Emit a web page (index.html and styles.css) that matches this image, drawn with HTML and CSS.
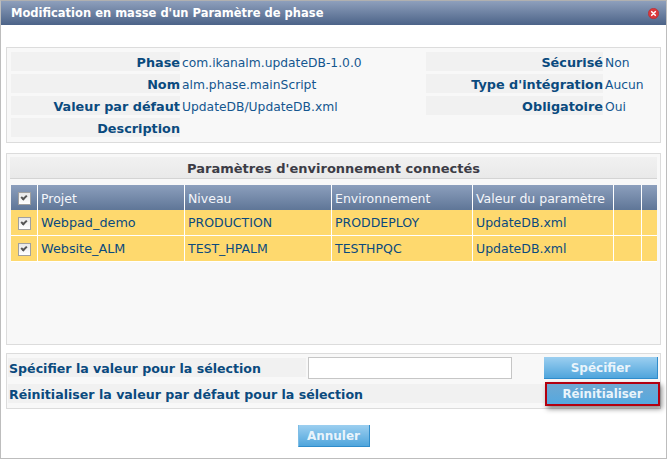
FILE: index.html
```html
<!DOCTYPE html>
<html>
<head>
	<meta charset="utf-8">
	<link rel="stylesheet" href="styles.css">
	<title>Modification en masse</title>
</head>
<body>
	<div class="dialog">
		<div class="titlebar">
			<span class="titleText">Modification en masse d'un Paramètre de phase</span>
			<svg class="closeIcon" width="11" height="11" viewBox="0 0 11 11">
				<circle cx="5.5" cy="5.5" r="5.2" fill="#d9383c" stroke="#b92c30" stroke-width="0.6"/>
				<path d="M3.7 3.7L7.3 7.3M7.3 3.7L3.7 7.3" stroke="#fff" stroke-width="1.6" stroke-linecap="round"/>
			</svg>
		</div>
		<div class="content">
			<div class="panel details">
				<div class="detailsCol leftCol">
					<div class="field"><div class="label">Phase</div><div class="value">com.ikanalm.updateDB-1.0.0</div></div>
					<div class="field"><div class="label">Nom</div><div class="value">alm.phase.mainScript</div></div>
					<div class="field"><div class="label">Valeur par défaut</div><div class="value">UpdateDB/UpdateDB.xml</div></div>
					<div class="field"><div class="label">Description</div><div class="value"></div></div>
				</div>
				<div class="detailsCol rightCol">
					<div class="field"><div class="label">Sécurisé</div><div class="value">Non</div></div>
					<div class="field"><div class="label">Type d'intégration</div><div class="value">Aucun</div></div>
					<div class="field"><div class="label">Obligatoire</div><div class="value">Oui</div></div>
				</div>
			</div>
			<div class="panel envPanel">
				<div class="envTitle">Paramètres d'environnement connectés</div>
				<table class="envTable">
					<colgroup>
						<col class="colCheck"><col class="colProject"><col class="colLevel"><col class="colEnv"><col class="colValue"><col class="colIcon"><col class="colIcon2">
					</colgroup>
					<thead>
						<tr>
							<th class="checkCell"><span class="check"></span></th>
							<th>Projet</th>
							<th>Niveau</th>
							<th>Environnement</th>
							<th>Valeur du paramètre</th>
							<th></th>
							<th></th>
						</tr>
					</thead>
					<tbody>
						<tr>
							<td class="checkCell"><span class="check"></span></td>
							<td class="projectCell">Webpad_demo</td>
							<td>PRODUCTION</td>
							<td>PRODDEPLOY</td>
							<td>UpdateDB.xml</td>
							<td></td>
							<td></td>
						</tr>
						<tr>
							<td class="checkCell"><span class="check"></span></td>
							<td class="projectCell">Website_ALM</td>
							<td>TEST_HPALM</td>
							<td>TESTHPQC</td>
							<td>UpdateDB.xml</td>
							<td></td>
							<td></td>
						</tr>
					</tbody>
				</table>
			</div>
			<div class="panel actions">
				<div class="actionRow specifyRow">
					<div class="actionLabel specifyLabel">Spécifier la valeur pour la sélection</div>
					<input type="text" class="valueInput">
					<div class="btn specifyBtn">Spécifier</div>
				</div>
				<div class="actionRow resetRow">
					<div class="actionLabel resetLabel">Réinitialiser la valeur par défaut pour la sélection</div>
					<div class="btn resetBtn">Réinitialiser</div>
				</div>
			</div>
			<div class="footer">
				<div class="btn cancelBtn">Annuler</div>
			</div>
		</div>
	</div>
</body>
</html>
```

FILE: styles.css
```css
html, body{
	margin: 0;
	padding: 0;
	background-color: #fff;
}
body{
	font-family: 'DejaVu Sans', sans-serif;
	font-size: 12px;
	color: #0a4a7e;
}
.dialog{
	box-sizing: border-box;
	width: 667px;
	height: 459px;
	border: solid 1px #bdbdbd;
	border-top-color: #b0b0b0;
	overflow: hidden;
}
.titlebar{
	box-sizing: border-box;
	height: 24px;
	padding: 0 7px 0 10px;
	display: flex;
	align-items: center;
	justify-content: space-between;
	background: linear-gradient(#8e9fbc, #4c6388);
	color: #fff;
	font-weight: bold;
	font-size: 11.5px;
}
.content{
	padding: 22px 5px 0 5px;
}
.panel{
	box-sizing: border-box;
	border: solid 1px #dcdcdc;
	background-color: #f8f8f8;
}
.details{
	height: 96px;
	padding: 4px 4px 0 4px;
	display: flex;
}
.detailsCol{
	display: flex;
	flex-direction: column;
	gap: 3px;
}
.leftCol{
	width: 415px;
}
.field{
	display: flex;
	height: 19px;
	line-height: 21px;
}
.label{
	background-color: #f1f1f1;
	font-weight: bold;
	text-align: right;
	font-size: 12.8px;
	flex: none;
}
.leftCol .label{
	width: 169px;
}
.rightCol .label{
	width: 177px;
}
.value{
	padding-left: 2px;
	white-space: nowrap;
	font-size: 12.3px;
	line-height: 22px;
	color: #14568f;
}
.envPanel{
	margin-top: 10px;
	height: 192px;
	padding: 3px 3px 0 3px;
}
.envTitle{
	height: 21px;
	line-height: 23px;
	text-align: center;
	font-weight: bold;
	font-size: 13px;
	color: #3c3c46;
	background: linear-gradient(#f1f1f1, #e9e9e9);
	border-bottom: solid 1px #d4d4d4;
}
.envTable{
	margin: 6px 0 0 1px;
	width: 646px;
	border-collapse: separate;
	border-spacing: 0;
	table-layout: fixed;
	font-size: 12.5px;
}
.colCheck{ width: 26px; }
.colProject{ width: 147px; }
.colLevel{ width: 147px; }
.colEnv{ width: 141px; }
.colValue{ width: 141px; }
.colIcon{ width: 28px; }
.colIcon2{ width: 16px; }
.envTable th, .envTable td{
	padding: 0 0 0 3px;
	border-left: solid 1px #fff;
	text-align: left;
	white-space: nowrap;
	overflow: hidden;
}
.envTable th:first-child, .envTable td:first-child{
	border-left: none;
}
.envTable th{
	height: 24px;
	padding-top: 1px;
	font-weight: normal;
	color: #f4f6fa;
	background: linear-gradient(#8c9fbd, #5f7697);
}
.envTable td{
	height: 25px;
	border-bottom: solid 1px #fff;
	background-color: #fed96e;
}
.envTable td.projectCell{
	font-size: 12.8px;
}
.envTable .checkCell{
	padding: 0;
	text-align: center;
}
.check{
	display: inline-block;
	box-sizing: border-box;
	width: 13px;
	height: 13px;
	vertical-align: middle;
	border: solid 1px #a0a0a0;
	background: linear-gradient(#e8e8e8, #fff);
	position: relative;
}
.check::after{
	content: "";
	position: absolute;
	left: 2px;
	top: 2px;
	width: 4px;
	height: 2px;
	border-left: solid 2px #555;
	border-bottom: solid 2px #555;
	transform: rotate(-45deg);
}
.actions{
	margin-top: 8px;
	height: 56px;
	padding: 3px 2px 0 1px;
	display: flex;
	flex-direction: column;
	gap: 3px;
}
.actionRow{
	display: flex;
	align-items: center;
}
.specifyRow{
	height: 22px;
}
.resetRow{
	height: 23px;
}
.actionLabel{
	box-sizing: border-box;
	height: 19px;
	line-height: 22px;
	padding-left: 1px;
	background-color: #f1f1f1;
	font-weight: bold;
	font-size: 12.6px;
	flex: none;
}
.specifyLabel{
	width: 298px;
	margin-bottom: 1px;
}
.valueInput{
	box-sizing: border-box;
	margin: 0 0 0 2px;
	width: 204px;
	height: 22px;
	border: solid 1px #c6c6c6;
	background-color: #fff;
}
.resetLabel{
	width: 537px;
}
.btn{
	box-sizing: border-box;
	text-align: center;
	font-weight: bold;
	color: #e9f4fb;
	background: linear-gradient(#9ccff0, #4fa5dc);
	border-bottom: solid 1px #2f8ccb;
	border-right: solid 1px #2f8ccb;
	flex: none;
}
.specifyBtn{
	margin-left: 32px;
	width: 114px;
	height: 22px;
	line-height: 22px;
}
.resetBtn{
	width: 115px;
	height: 24px;
	line-height: 21px;
	font-size: 11.8px;
	border: solid 2px #b3000f;
	background: linear-gradient(#6fa9d2, #55a8df);
	box-shadow: 2px 3px 5px rgba(0,0,0,.45);
}
.footer{
	display: flex;
	justify-content: center;
	margin-top: 16px;
}
.cancelBtn{
	width: 72px;
	height: 22px;
	line-height: 22px;
	border-left: solid 1px #7ebde6;
}
```
